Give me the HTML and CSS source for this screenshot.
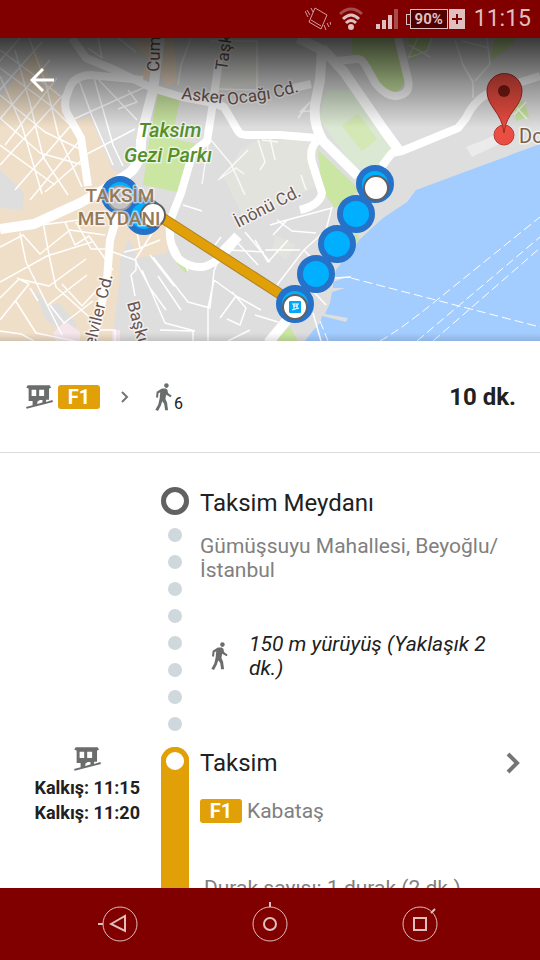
FILE: index.html
```html
<!DOCTYPE html>
<html lang="tr">
<head>
    <meta charset="utf-8">
    <title>Taksim Meydanı</title>
    <meta name="viewport" content="width=device-width, initial-scale=1" />
    <link rel="stylesheet" href="styles.css">
</head>
<body>
<!-- shared icons -->
<svg class="sprite" aria-hidden="true">
    <symbol id="tram" viewBox="0 0 82 72">
        <path fill-rule="evenodd" d="M5 0H72L76 8L70 10V44H61V51L80 45L82 51L2 72L0 66L20 61V48H8V10L1 8ZM17 14V33H31V14ZM40 14V33H55V14ZM34 57L50 53V45H42L35 50Z"/>
    </symbol>
    <symbol id="walk" viewBox="0 0 50 86">
        <circle cx="34" cy="8" r="7"/>
        <path d="M20 17H32L37 21L39 31L50 39L47 44L33 36L31 49L36 61L39 84H30L27 64L21 56L17 69L8 86L0 82L9 66L13 48L15 29L10 31L8 45L2 44L4 27Z"/>
    </symbol>
</svg>

<div class="screen">
    <header class="statusbar">
        <svg class="vibrate" width="26" height="24" viewBox="0 0 26 24">
            <path d="M10 1L22 8L16 22L4 15ZM6 13L16 19M2 3L5 8M6 1L8 5M22 16L24 20M19 18L21 23M0 4L3 10M25 15L26 18"/>
        </svg>
        <svg class="wifi" width="24" height="24" viewBox="0 0 24 24">
            <path class="dim" d="M1 7Q12 -3 23 7"/>
            <path d="M4 12Q12 4 20 12M7 16Q12 11 17 16"/>
            <circle cx="12" cy="20" r="3"/>
        </svg>
        <svg class="signal" width="22" height="20" viewBox="0 0 22 20">
            <path d="M0 15h4v5H0zM6 11h4v9H6zM12 6h4v14h-4z"/>
            <path class="dim" d="M18 0h4v20h-4z"/>
        </svg>
        <span class="battery"><span class="level">90%</span><span class="plus"></span></span>
        <span class="clock">11:15</span>
    </header>

    <section class="map">
        <svg class="tiles" viewBox="0 38 540 303" preserveAspectRatio="xMidYMid slice">
            <rect class="land" y="38" width="540" height="303"/>

            <!-- districts -->
            <path class="district" d="M37 50L55 88L65 110L80 120L90 116L115 170L168 225L167 253L138 258L129 239L120 260L119 285L112 341H0V208L22 210L24 193L0 170V98Z"/>
            <path class="district" d="M128 38H174L177 82L165 87L160 70L130 90L150 60Z"/>
            <path class="land" d="M90 116L78 76L140 78L146 120L134 166L113 170Z"/>
            <path class="block" d="M222 38H258L260 84L220 90ZM240 150L258 140H310V155L319 185L287 200L260 215L245 220L224 178ZM275 235L296 245L286 260L272 249Z"/>
            <path class="land" d="M33 288L50 307L58 302L78 325L66 334L46 320Z"/>
            <path class="pinkish" d="M53 333L65 321L80 332V341H56ZM112 330H120V341H112Z"/>

            <!-- parks -->
            <path class="park" d="M158 94L180 98L172 139L194 143L198 150L182 193L143 185L149 140Z"/>
            <path class="park" d="M352 38H400L405 79Q400 98 380 92L368 75L352 52ZM408 38H430L428 51L410 60ZM495 38H515L512 45L490 62ZM318 150L360 190L335 208L322 190ZM513 105L524 100L529 117L516 121ZM171 256L190 268L185 273ZM280 333L290 327L298 341H278ZM356 232L360 240L353 244Z"/>
            <path class="grove" d="M326 90H354L395 147L383 160L380 169L355 168L319 119Z"/>
            <path class="field" d="M358 113L377 139L362 151L342 126Z"/>

            <!-- sea -->
            <path class="sea" d="M540 144L416 190L407 202L383 218L360 239L336 270L334 278L344 278L333 282V288L345 288L332 292L330 303L325 314L348 318L346 322L322 316L320 323L311 333L305 341H540Z"/>
            <path class="palace" d="M466 147L484 140L496 134L499 144L472 157Z"/>

            <!-- side streets -->
            <path class="street" d="M0 50L30 72L60 96M0 68L50 105L72 127M0 95L45 132L82 150M0 118L40 153L83 165M0 145L55 185M20 38L0 61M42 42L0 90M50 60L0 119M57 78L5 145M63 95L0 165M73 123L15 190M80 140L30 200M84 158L45 192M29 38L46 84L58 134L82 187M15 50L30 103L43 157L68 195M0 76L22 126L42 194"/>
            <path class="street" d="M78 78L92 116L113 165M94 78L113 145L123 166M74 119L145 87M87 154L135 129M97 78L137 120M128 90L137 102L118 109M98 38L102 58L88 48M118 38L136 52M0 230L65 222L104 216M20 233L26 262L62 335M0 247L23 235L40 254L70 230L105 235M0 282L47 256L92 242M43 222L49 255L56 287L88 316M65 222L75 245L89 236L113 270M0 298L19 279L49 286L86 259M62 284L82 306L110 276M48 305L87 275M0 320L29 284L17 278M15 300L36 333L75 341M50 305L64 323L93 301M76 222L91 249L105 249M30 288L38 301M0 331L21 334L34 341"/>
            <path class="street" d="M135 222L140 248L160 240M142 248L124 252M163 216L135 260L150 288L166 310M113 252L135 260M150 255L174 286M136 260V270L131 275L135 296M142 270L165 323L195 331M158 276L181 310M153 257L188 302L210 308L214 271L218 261M173 240L188 271M183 205L202 211M214 280L236 296L220 318M214 280L208 308V341M232 292L246 308L240 325L227 319M236 296L261 310M250 330L228 341M235 240L258 265M245 232L270 262M230 250L264 252M221 237L215 245M160 330L193 331V341M98 330H115V341M255 315L278 322"/>
            <path class="street light" d="M191 38L181 65L178 85M210 41H257V90L216 89M208 145L202 184M211 140L231 164L245 195M218 180L236 168L244 174M220 178L248 150M258 140L265 162L260 170M270 138L275 160M301 175L306 190M262 140L278 142M312 173L317 186M298 118L310 102L300 112L317 110"/>
            <path class="street" d="M270 225L287 220L332 208M277 220L292 231L316 233M273 235L287 220M332 207L326 230L304 250L277 285M265 250L300 250M310 288L283 300M304 250L315 262L336 246M255 240L268 262L288 240M312 290L326 305M313 313L321 341"/>
            <path class="street light" d="M455 40L463 65L473 82V98M487 38L490 64L475 81M462 41L489 48M418 38L408 58L427 51L432 38M409 45L430 57M517 108L527 119M514 115L526 102"/>

            <!-- main roads -->
            <path class="road" d="M72 38L86 58L115 70L152 88L182 97L214 103L224 107L238 131Q240 135 247 135H280L317 138"/>
            <path class="road" d="M143 80L90 75Q72 76 68 92Q62 105 68 115L81 138L88 186"/>
            <path class="road big" d="M160 38L153 90L144 125L141 141Q141 165 128 174L103 190L80 203L34 224L0 229"/>
            <path class="road" d="M219 60L213 103L207 141L193 152L181 193L170 221Q168 248 179 259Q190 268 203 267Q218 264 238 237M300 210Q320 205 322 193L312 162Q309 148 317 141"/>
            <path class="road" d="M120 207L110 240L107 280L93 341"/>
            <path class="road big" d="M238 236L222 253"/>
            <path class="road big" d="M298 38L322 50L320 80L315 105Q313 125 323 141L358 176M322 48L344 72L384 130L400 152"/>
            <path class="road" d="M336 61L357 59Q362 58 367 68L376 84Q391 102 405 93Q411 88 407 75L398 38M285 90L311 84"/>
            <path class="road" d="M382 166L392 153L402 151L458 128L466 118Q475 98 495 90L540 76"/>
            <path class="road big" d="M268 343L292 314"/>

            <!-- ferry lines -->
            <path class="street" d="M335 278L351 277"/>
            <path class="ferry" d="M351 278L540 327M380 341Q400 330 437 300L540 217M417 341L540 237M433 341L540 248M320 321L328 341"/>

            <!-- route -->
            <path class="ride edge" d="M150 210L294 303"/>
            <path class="ride" d="M150 210L294 303"/>
            <g class="walkdots">
                <circle cx="120" cy="195" r="16"/>
                <circle cx="144" cy="216" r="16"/>
                <circle cx="295" cy="304" r="16"/>
                <circle cx="316" cy="274" r="16"/>
                <circle cx="337" cy="244" r="16"/>
                <circle cx="356" cy="214" r="16"/>
                <circle cx="375" cy="184" r="16"/>
            </g>
            <g class="stops">
                <circle class="muted" cx="120" cy="198" r="12"/>
                <circle cx="153" cy="215" r="12"/>
                <circle cx="295" cy="307" r="12"/>
                <circle cx="376" cy="188" r="12"/>
            </g>
            <rect class="station" x="289" y="301" width="12" height="12" rx="1"/>
            <path class="stationmark" d="M292 304H299M293 306H298M292 310L299 308M294 304V309M297 304V308"/>

            <!-- labels -->
            <g class="label parkname">
                <text x="170" y="137">Taksim</text>
                <text x="168" y="162">Gezi Parkı</text>
            </g>
            <g class="label square">
                <text x="120" y="202">TAKSİM</text>
                <text x="119" y="225">MEYDANI</text>
            </g>
            <g class="label roadname">
                <text transform="translate(159 72) rotate(-88)">Cum</text>
                <text transform="translate(227 71) rotate(-82)">Taşk</text>
                <text transform="translate(181 99) rotate(6)">Asker</text>
                <text transform="translate(228 105) rotate(-8)">Ocağı</text>
                <text transform="translate(275 98) rotate(-15)">Cd.</text>
                <text transform="translate(238 228) rotate(-27)">İnönü Cd.</text>
                <text transform="translate(95 347) rotate(-76)">elviler Cd.</text>
                <text transform="translate(127 303) rotate(75)">Başku</text>
            </g>
            <text class="label place" x="519" y="143">Do</text>

            <!-- destination -->
            <circle class="pinbase" cx="504" cy="135" r="10"/>
            <path class="pin" d="M504 133C502 112 487 107 487 91A17.500 17.500 0 0 1 522 91C522 107 506 112 504 133Z"/>
            <circle class="pinhole" cx="504" cy="91" r="6"/>
        </svg>
        <div class="shade"></div>
        <button class="back" aria-label="Geri">
            <svg width="24" height="24" viewBox="0 0 24 24"><path d="M24 12H2M13 1L2 12L13 23"/></svg>
        </button>
    </section>

    <section class="summary">
        <svg class="icon tram"><use href="#tram"/></svg>
        <span class="line">F1</span>
        <svg class="next" width="8" height="12" viewBox="0 0 8 12"><path d="M1 1L6 6L1 11"/></svg>
        <svg class="icon walk"><use href="#walk"/></svg>
        <span class="minutes">6</span>
        <strong class="duration">10 dk.</strong>
    </section>

    <main class="steps">
        <article class="step">
            <div class="times"></div>
            <div class="track">
                <span class="ring"></span>
                <span class="dot"></span>
                <span class="dot"></span>
                <span class="dot"></span>
                <span class="dot"></span>
                <span class="dot"></span>
                <span class="dot"></span>
                <span class="dot"></span>
                <span class="dot"></span>
            </div>
            <div class="info">
                <h2>Taksim Meydanı</h2>
                <p class="address">Gümüşsuyu Mahallesi, Beyoğlu/<br>İstanbul</p>
                <div class="onfoot">
                    <svg class="icon walk"><use href="#walk"/></svg>
                    <p>150 m yürüyüş (Yaklaşık 2 dk.)</p>
                </div>
            </div>
        </article>

        <article class="step">
            <div class="times">
                <div class="departures">
                    <svg class="icon tram"><use href="#tram"/></svg>
                    <span>Kalkış: 11:15</span>
                    <span>Kalkış: 11:20</span>
                </div>
            </div>
            <div class="track ridden"><span class="ring"></span></div>
            <div class="info">
                <div class="heading">
                    <h2>Taksim</h2>
                    <button class="more" aria-label="Taksim">
                        <svg width="14" height="22" viewBox="0 0 14 22"><path d="M2 2L11 11L2 20"/></svg>
                    </button>
                </div>
                <div class="towards"><span class="line">F1</span> <span>Kabataş</span></div>
                <p class="stopcount">Durak sayısı: 1 durak (2 dk.)</p>
            </div>
        </article>
    </main>

    <nav class="navbar">
        <button aria-label="Geri">
            <svg width="44" height="44" viewBox="0 0 44 44"><circle cx="22" cy="22" r="17"/><path class="glyph" d="M5 22H0M13 22L27 14V29Z"/></svg>
        </button>
        <button aria-label="Ana ekran">
            <svg width="44" height="44" viewBox="0 0 44 44"><circle cx="22" cy="22" r="17"/><path class="glyph" d="M22 5V0"/><circle class="glyph" cx="22" cy="22" r="6"/></svg>
        </button>
        <button aria-label="Son uygulamalar">
            <svg width="44" height="44" viewBox="0 0 44 44"><circle cx="22" cy="22" r="17"/><path class="glyph" d="M33 11L37 7M16 16H28V28H16Z"/></svg>
        </button>
    </nav>
</div>
</body>
</html>
```
FILE: styles.css
```css
* {
    box-sizing: border-box;
}

body {
    margin: 0;
    background: #fff;
    color: #212121;
    font-family: Roboto, "Noto Sans", sans-serif;
}

h2, p {
    margin: 0;
    font-weight: normal;
}

button {
    padding: 0;
    border: 0;
    background: none;
    cursor: pointer;
}

svg {
    display: block;
    flex: none;
}

.sprite {
    position: absolute;
    width: 0;
    height: 0;
}

.screen {
    display: flex;
    flex-direction: column;
    height: 100vh;
}

/* status bar */
.statusbar {
    display: flex;
    flex: none;
    align-items: center;
    justify-content: flex-end;
    height: 38px;
    padding-right: 9px;
    background: #800000;
    color: #dfbfbf;
}

.statusbar svg {
    fill: #dfbfbf;
}

.statusbar .dim {
    opacity: 0.4;
}

.statusbar .vibrate {
    margin-right: 8px;
    fill: none;
    stroke: #cf9f9f;
}

.wifi {
    margin-right: 13px;
}

.wifi path {
    fill: none;
    stroke: #dfbfbf;
    stroke-width: 3;
}

.signal {
    margin-right: 8px;
}

.battery {
    display: flex;
    height: 20px;
    margin-right: 9px;
}

.battery::before {
    /* battery tip */
    content: "";
    align-self: center;
    width: 3px;
    height: 9px;
    border: 1px solid #dfbfbf;
    border-right: 0;
}

.level {
    width: 38px;
    border: 1px solid #dfbfbf;
    background: #500000;
    font-size: 15px;
    font-weight: bold;
    line-height: 19px;
    text-align: center;
}

.plus {
    width: 16px;
    margin-left: 1px;
    background:
        linear-gradient(#800000, #800000) center / 10px 2px no-repeat,
        linear-gradient(#800000, #800000) center / 2px 10px no-repeat,
        #dfbfbf;
}

.clock {
    font-size: 23px;
    line-height: 28px;
}

/* map */
.map {
    position: relative;
    flex: none;
    height: 303px;
    overflow: hidden;
}

.tiles {
    width: 100%;
    height: 100%;
}

.shade {
    position: absolute;
    top: 0;
    left: 0;
    width: 100%;
    height: 100%;
    background:
        linear-gradient(rgba(0, 0, 0, 0.75), rgba(0, 0, 0, 0.35) 45px, rgba(0, 0, 0, 0) 90px),
        linear-gradient(to top, rgba(0, 0, 0, 0.12), rgba(0, 0, 0, 0) 8px);
}

.back {
    position: absolute;
    top: 30px;
    left: 30px;
}

.back path {
    fill: none;
    stroke: #fff;
    stroke-width: 3;
}

.land { fill: #dedede; }
.district { fill: #f0dfc8; }
.block { fill: #e2e3dd; }
.palace { fill: #ebebeb; }
.pinkish { fill: #f5e6ec; }
.park { fill: #cae6a2; }
.grove { fill: #dbe8d3; }
.field { fill: #d4e8b5; }
.sea { fill: #a3ccff; }

.street, .road, .ferry {
    fill: none;
    stroke: #fff;
    stroke-width: 1.5;
    stroke-linejoin: round;
}

.street.light {
    opacity: 0.8;
}

.road {
    stroke-width: 8;
}

.road.big {
    stroke-width: 10;
}

.ferry {
    stroke-width: 1;
    stroke-dasharray: 9 4;
}

.ride {
    fill: none;
    stroke: #e2a008;
    stroke-width: 9;
}

.ride.edge {
    stroke: #ad8126;
    stroke-width: 11;
}

.walkdots circle {
    fill: #00b0ff;
    stroke: #2672c8;
    stroke-width: 6;
}

.stops circle {
    fill: #fff;
    stroke: #616161;
    stroke-width: 2;
}

.stops .muted {
    fill: #c4c4c4;
    stroke: #9a9a9a;
}

.station {
    fill: #00a8f8;
}

.stationmark {
    fill: none;
    stroke: #fff;
}

.label {
    paint-order: stroke;
    stroke: rgba(255, 255, 255, 0.6);
    stroke-width: 3;
    stroke-linejoin: round;
}

.parkname {
    fill: #558f2a;
    font-size: 20px;
    font-style: italic;
    font-weight: 500;
    text-anchor: middle;
}

.square {
    fill: #967959;
    font-size: 19px;
    font-weight: 500;
    text-anchor: middle;
}

.roadname {
    fill: #6b5450;
    font-size: 17px;
}

.place {
    fill: #7d5f48;
    font-size: 20px;
}

.pinbase {
    fill: #e84e42;
    stroke: #b93b32;
}

.pin {
    fill: #ea4c40;
    stroke: #a12a24;
}

.pinhole {
    fill: #7a1a14;
}

/* route summary */
.icon {
    fill: #6b6d6c;
}

.icon.tram {
    width: 27px;
    height: 24px;
}

.icon.walk {
    width: 17px;
    height: 28px;
}

.line {
    display: inline-block;
    width: 42px;
    height: 24px;
    border-radius: 3px;
    background: #e2a008;
    color: #fff;
    font-size: 20px;
    font-weight: bold;
    line-height: 24px;
    text-align: center;
}

.summary {
    display: flex;
    flex: none;
    align-items: center;
    height: 112px;
    padding: 0 24px 0 26px;
    border-bottom: 1px solid #dcdcdc;
}

.summary .line {
    margin-left: 5px;
}

.next {
    margin: 0 26px 0 21px;
}

.next path, .more path {
    fill: none;
    stroke: #757575;
    stroke-width: 2;
}

.minutes {
    padding-top: 14px;
    margin-left: 2px;
    font-size: 16px;
    line-height: 20px;
}

.duration {
    margin-left: auto;
    font-size: 24px;
    line-height: 28px;
}

/* steps */
.steps {
    flex: 1;
    min-height: 0;
    padding-top: 34px;
    overflow: hidden;
}

.step {
    display: grid;
    grid-template-columns: 140px 28px 1fr;
    column-gap: 21px;
}

.times {
    display: flex;
    justify-content: flex-end;
}

.departures {
    display: flex;
    flex-direction: column;
    align-items: center;
    font-size: 18px;
    font-weight: bold;
    line-height: 25px;
}

.departures .icon {
    margin-bottom: 4px;
}

.track {
    display: flex;
    flex-direction: column;
    align-items: center;
    gap: 13px;
    padding-bottom: 16px;
}

.ring {
    width: 28px;
    height: 28px;
    border: 5px solid #616161;
    border-radius: 50%;
    background: #fff;
}

.dot {
    width: 14px;
    height: 14px;
    border-radius: 50%;
    background: #cfd8dc;
}

.ridden {
    border-radius: 14px 14px 0 0;
    background: #e2a008;
}

.ridden .ring {
    border-color: #e2a008;
}

.info {
    margin-left: -10px;
}

h2 {
    font-size: 24px;
    line-height: 32px;
}

.address, .towards, .stopcount {
    color: #808080;
    font-size: 21px;
    line-height: 24px;
}

.address {
    margin-top: 15px;
}

.onfoot {
    display: flex;
    align-items: center;
    gap: 21px;
    margin-top: 50px;
    padding: 0 50px 0 11px;
    font-size: 21px;
    font-style: italic;
    line-height: 24px;
}

.heading {
    display: flex;
    align-items: center;
    justify-content: space-between;
    padding-right: 20px;
}

.more path {
    stroke-width: 4;
}

.towards {
    display: flex;
    align-items: center;
    gap: 5px;
    margin-top: 20px;
}

.stopcount {
    margin-top: 53px;
    padding: 0 0 24px 4px;
}

/* navigation bar */
.navbar {
    display: flex;
    flex: none;
    justify-content: center;
    height: 72px;
    padding: 0 45px;
    background: #800000;
}

.navbar button {
    display: flex;
    flex: 1;
    align-items: center;
    justify-content: center;
}

.navbar svg {
    fill: none;
    stroke: #dfbfbf;
}

.navbar .glyph {
    stroke-width: 2;
}
```
